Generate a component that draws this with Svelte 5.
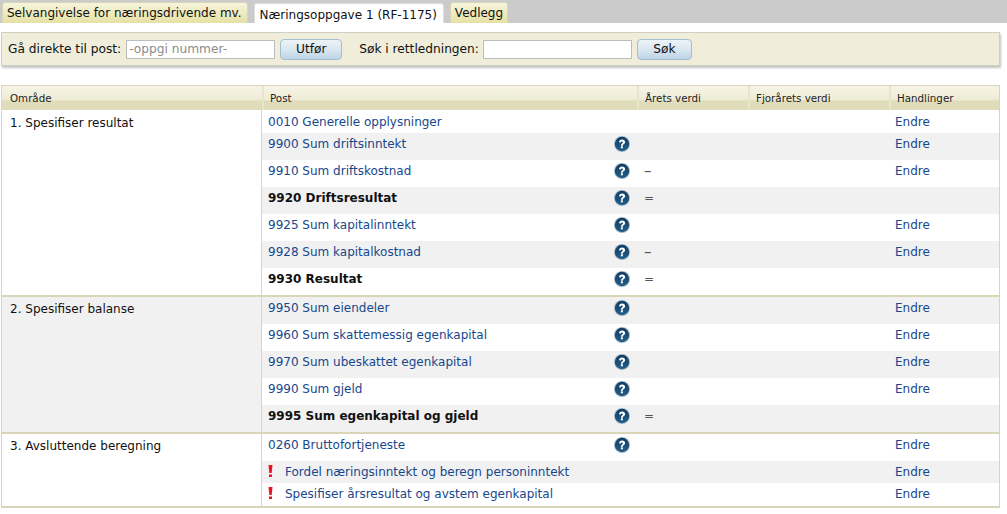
<script>
  const tabs = [
    { label: "Selvangivelse for næringsdrivende mv." },
    { label: "Næringsoppgave 1 (RF-1175)", active: true },
    { label: "Vedlegg" },
  ];

  const sections = [
    {
      title: "1. Spesifiser resultat",
      rows: [
        { post: "0010 Generelle opplysninger", edit: true, height: "first" },
        { post: "9900 Sum driftsinntekt", help: true, edit: true },
        { post: "9910 Sum driftskostnad", help: true, sign: "–", edit: true },
        { post: "9920 Driftsresultat", help: true, sign: "=", bold: true },
        { post: "9925 Sum kapitalinntekt", help: true, edit: true },
        { post: "9928 Sum kapitalkostnad", help: true, sign: "–", edit: true },
        { post: "9930 Resultat", help: true, sign: "=", bold: true },
      ],
    },
    {
      title: "2. Spesifiser balanse",
      rows: [
        { post: "9950 Sum eiendeler", help: true, edit: true },
        { post: "9960 Sum skattemessig egenkapital", help: true, edit: true },
        { post: "9970 Sum ubeskattet egenkapital", help: true, edit: true },
        { post: "9990 Sum gjeld", help: true, edit: true },
        { post: "9995 Sum egenkapital og gjeld", help: true, sign: "=", bold: true },
      ],
    },
    {
      title: "3. Avsluttende beregning",
      rows: [
        { post: "0260 Bruttofortjeneste", help: true, edit: true },
        { post: "Fordel næringsinntekt og beregn personinntekt", warn: true, edit: true, height: "h22" },
        { post: "Spesifiser årsresultat og avstem egenkapital", warn: true, edit: true, height: "h23" },
      ],
    },
  ];

  // the zebra runs on through the sections, the area cell takes the colour of its first row
  function shaded(sectionIndex, rowIndex) {
    return sectionIndex === 1 ? rowIndex % 2 === 0 : rowIndex % 2 === 1;
  }
</script>

<div class="tabbar">
  {#each tabs as tab}
    <div class="tab" class:active={tab.active}>{tab.label}</div>
  {/each}
</div>

<div class="toolbar">
  <label for="post">Gå direkte til post:</label>
  <input id="post" placeholder="-oppgi nummer-" />
  <button>Utfør</button>
  <label for="search" class="search-label">Søk i rettledningen:</label>
  <input id="search" />
  <button class="search-btn">Søk</button>
</div>

<table>
  <colgroup>
    <col class="col-area" />
    <col class="col-post" />
    <col class="col-year" />
    <col class="col-last" />
    <col />
  </colgroup>
  <thead>
    <tr>
      <th>Område</th>
      <th>Post</th>
      <th>Årets verdi</th>
      <th>Fjorårets verdi</th>
      <th>Handlinger</th>
    </tr>
  </thead>
  {#each sections as section, s}
    <tbody class:later={s > 0}>
      {#each section.rows as row, r}
        <tr class="{row.height ?? ''}" class:shaded={shaded(s, r)}>
          {#if r === 0}
            <td class="area" class:grey={s === 1} rowspan={section.rows.length}>{section.title}</td>
          {/if}
          <td class="post">
            <div class="post-inner">
              {#if row.warn}
                <svg class="warn" viewBox="0 0 5 12" width="5" height="12" aria-hidden="true">
                  <path d="M0.500 0h4L3.700 8H1.300z" fill="#ee1122" />
                  <rect x="1" y="9.500" width="3" height="2.500" fill="#ee1122" />
                </svg>
              {/if}
              {#if row.bold}
                <b>{row.post}</b>
              {:else}
                <a href="#top">{row.post}</a>
              {/if}
              {#if row.help}
                <svg class="help" viewBox="0 0 16 16" width="16" height="16" aria-hidden="true">
                  <defs>
                    <linearGradient id="help-fill" x1="0" y1="0" x2="0" y2="1">
                      <stop offset="0" stop-color="#123c63" />
                      <stop offset="1" stop-color="#235f88" />
                    </linearGradient>
                  </defs>
                  <circle cx="8" cy="8" r="8" fill="#a7bccb" />
                  <circle cx="8" cy="8" r="7.200" fill="url(#help-fill)" />
                  <path d="M5 6.300C5.100 4.500 6.400 3.600 8.100 3.600c1.800 0 3 1 3 2.500 0 1.200-.7 1.800-1.400 2.200-.6.400-.8.700-.8 1.400H6.900c0-1.200.4-1.800 1.100-2.300.6-.4.900-.7.900-1.200 0-.5-.3-.8-.9-.8-.6 0-1 .4-1 1.100z" fill="#fff" />
                  <rect x="6.900" y="10.300" width="2" height="2" fill="#fff" />
                </svg>
              {/if}
            </div>
          </td>
          <td class="value"><span class:dash={row.sign === "–"}>{row.sign ?? ""}</span></td>
          <td></td>
          <td class="action">{#if row.edit}<a href="#top">Endre</a>{/if}</td>
        </tr>
      {/each}
    </tbody>
  {/each}
</table>

<style>
  :global(body) {
    margin: 0;
    background: #fff;
    font-family: "DejaVu Sans", Verdana, sans-serif;
    font-size: 12px;
    color: #111;
  }

  .tabbar {
    display: flex;
    gap: 6px;
    height: 23px;
    padding-left: 2px;
    align-items: flex-end;
    background: #cbcbcb;
    letter-spacing: 0.001px;
  }

  .tab {
    height: 21px;
    box-sizing: border-box;
    padding: 3px 5px 0 4px;
    border: 1px solid #d8d6b8;
    border-bottom: 0;
    border-radius: 3px 3px 0 0;
    background: linear-gradient(#f6f4dc, #e6e1a4);
    white-space: nowrap;
  }

  .tab:last-child {
    padding-right: 4px;
  }

  .tab.active {
    height: 20px;
    padding: 4px 6px 0 5px;
    background: #fff;
    border-color: #dedede;
  }

  .toolbar {
    display: flex;
    align-items: center;
    height: 34px;
    box-sizing: border-box;
    margin: 9px 7px 0 1px;
    padding-left: 6px;
    background: #f0eedb;
    border: 1px solid #cfcfc4;
    box-shadow: 1px 2px 2px #c4c4c4;
    font-size: 12.200px;
  }

  input {
    box-sizing: border-box;
    width: 149px;
    height: 19px;
    margin: 0 0 0 5px;
    padding: 0 2px;
    border: 1px solid #bdbdbd;
    background: #fff;
    font: inherit;
  }

  input::placeholder {
    color: #8c8c8c;
    opacity: 1;
  }

  button {
    box-sizing: border-box;
    width: 62px;
    height: 21px;
    margin-left: 5px;
    padding: 0;
    border: 1px solid #a4bed2;
    border-radius: 4px;
    background: linear-gradient(#edf3f7 0%, #dbe7f0 50%, #bcd5e8 100%);
    font: inherit;
    color: #111;
  }

  .search-label {
    margin-left: 17px;
  }

  .search-label + input {
    margin-left: 4px;
  }

  .search-btn {
    width: 55px;
  }

  table {
    width: 999px;
    margin: 19px 0 0 1px;
    border-collapse: separate;
    border-spacing: 0;
    table-layout: fixed;
    border: 1px solid #d9d6b8;
    border-bottom-width: 2px;
  }

  .col-area {
    width: 260px;
  }

  .col-post {
    width: 375px;
  }

  .col-year {
    width: 111px;
  }

  .col-last {
    width: 141px;
  }

  thead tr {
    height: 24px;
  }

  th {
    box-sizing: border-box;
    padding: 0 0 0 6px;
    border-left: 2px solid #e8e5cd;
    background: linear-gradient(#f6f4e6 0%, #eeebd6 58%, #e0dcb9 62%, #e0dcb9 100%);
    text-align: left;
    font-weight: normal;
    font-size: 10.300px;
    color: #222;
  }

  th:first-child {
    padding-left: 8px;
    border-left: 0;
  }

  tbody tr {
    height: 27px;
  }

  tbody tr.first,
  tbody tr.h23 {
    height: 23px;
  }

  tbody tr.h22 {
    height: 22px;
  }

  tbody.later tr:first-child {
    height: 29px;
  }

  tbody.later tr:first-child td {
    border-top: 2px solid #d9d6b8;
  }

  tr.shaded td {
    background: #f1f1f1;
  }

  td {
    box-sizing: border-box;
    padding: 0;
    vertical-align: top;
  }

  tr td.area {
    padding: 6px 0 0 8px;
    border-right: 1px solid #d9d6b8;
    background: #fff;
  }

  tbody.later tr td.area {
    padding-top: 5px;
  }

  tr td.area.grey {
    background: #f1f1f1;
  }

  .post-inner {
    position: relative;
    display: flex;
    padding: 4px 0 0 6px;
  }

  tr.first .post-inner {
    padding-top: 5px;
  }

  .help {
    position: absolute;
    left: 352px;
    top: 3px;
  }

  .warn {
    flex: none;
    margin: 0 12px 0 0;
  }

  a {
    color: #17478c;
    text-decoration: none;
  }

  .value {
    padding: 4px 0 0 7px;
    line-height: 14px;
    color: #555;
  }

  .dash {
    font-size: 15px;
  }

  .action {
    padding: 4px 0 0 6px;
  }

  tr.first .action {
    padding-top: 5px;
  }
</style>
